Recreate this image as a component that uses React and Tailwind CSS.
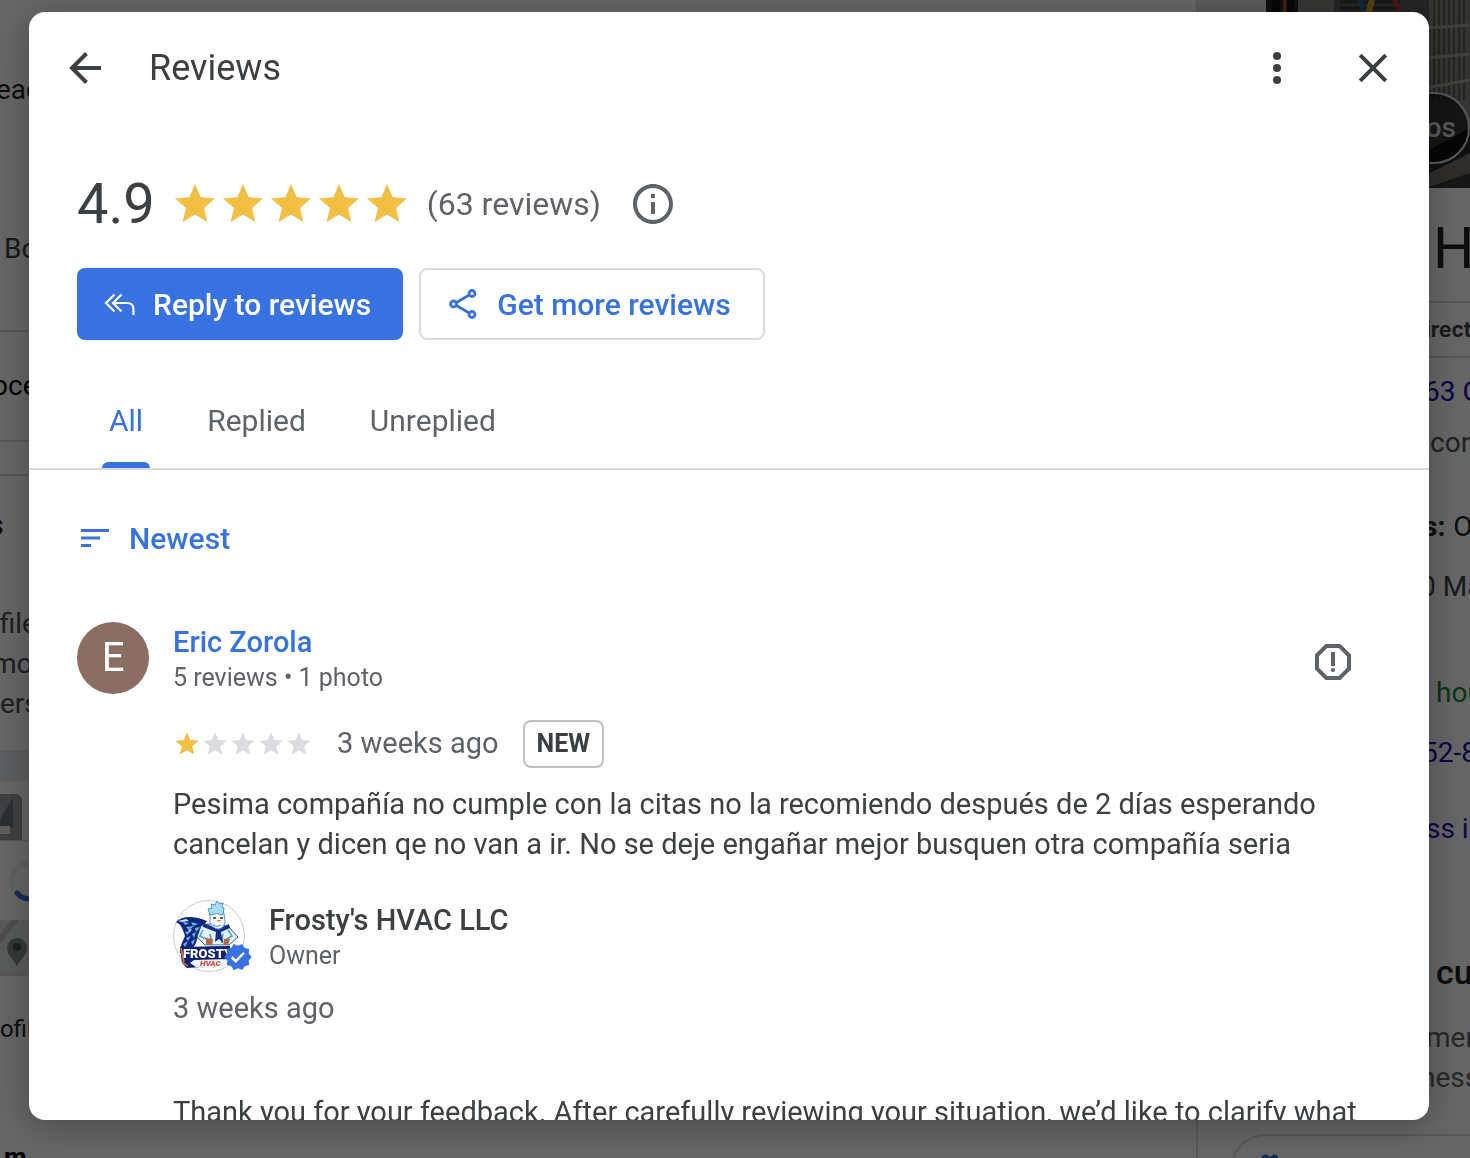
import React from "react";

const STAR = "M12 17.27 18.18 21l-1.64-7.03L22 9.24l-7.19-.61L12 2 9.19 8.63 2 9.24l5.46 4.73L5.82 21z";

function Star({ className }) {
  return (
    <svg viewBox="0 0 24 24" fill="currentColor" className={className} aria-hidden="true">
      <path d={STAR} />
    </svg>
  );
}

function BackIcon() {
  return (
    <svg viewBox="0 0 48 48" className="size-12" fill="none" stroke="currentColor" strokeWidth="4" aria-hidden="true">
      <path d="M40 24H11M25.5 9.5 11 24l14.5 14.5" />
    </svg>
  );
}

function CloseIcon() {
  return (
    <svg viewBox="0 0 48 48" className="size-12" fill="none" stroke="currentColor" strokeWidth="4" aria-hidden="true">
      <path d="M11.2 11.2 36.8 36.8M36.8 11.2 11.2 36.8" />
    </svg>
  );
}

function MoreIcon() {
  return (
    <svg viewBox="0 0 48 48" className="size-12" fill="currentColor" aria-hidden="true">
      <circle cx="24" cy="12" r="4" />
      <circle cx="24" cy="24" r="4" />
      <circle cx="24" cy="36" r="4" />
    </svg>
  );
}

function InfoIcon() {
  return (
    <svg viewBox="0 0 24 24" className="size-12" fill="currentColor" aria-hidden="true">
      <path d="M11 7h2v2h-2zm0 4h2v6h-2zm1-9C6.48 2 2 6.48 2 12s4.48 10 10 10 10-4.48 10-10S17.52 2 12 2zm0 18c-4.41 0-8-3.59-8-8s3.59-8 8-8 8 3.59 8 8-3.59 8-8 8z" />
    </svg>
  );
}

function ReplyAllIcon() {
  return (
    <svg viewBox="0 0 36 36" className="size-9" fill="none" stroke="currentColor" strokeWidth="2.2" aria-hidden="true">
      <path d="M13.500 8.500 5 17l8.500 8.500M20.500 8.500 12 17l8.500 8.500M12 17h14q6.500 0 6.500 6.500V29" />
    </svg>
  );
}

function ShareIcon() {
  return (
    <svg viewBox="0 0 36 36" className="size-9" fill="none" stroke="currentColor" strokeWidth="2.8" aria-hidden="true">
      <circle cx="27" cy="7.5" r="3" />
      <circle cx="8.5" cy="18" r="3" />
      <circle cx="27" cy="28.5" r="3" />
      <path d="m11.200 16.500 13.100-7.500M11.200 19.500l13.100 7.500" />
    </svg>
  );
}

function SortIcon() {
  return (
    <svg viewBox="0 0 36 36" className="size-9" fill="currentColor" aria-hidden="true">
      <path d="M4 9h28v3H4zM4 16.5h19v3H4zM4 24h10v3H4z" />
    </svg>
  );
}

function ReportIcon() {
  return (
    <svg viewBox="0 0 24 24" className="size-12" fill="currentColor" aria-hidden="true">
      <path d="M15.73 3H8.27L3 8.27v7.46L8.27 21h7.46L21 15.73V8.27L15.73 3zM19 14.9 14.9 19H9.1L5 14.9V9.1L9.1 5h5.8L19 9.1v5.8z" />
      <circle cx="12" cy="16" r="1" />
      <path d="M11 7h2v7h-2z" />
    </svg>
  );
}

function VerifiedIcon() {
  return (
    <svg viewBox="0 0 24 24" className="absolute -right-2 bottom-0 size-[30px]" aria-hidden="true">
      <path
        fill="#3871e0"
        d="M23 12l-2.440-2.790.34-3.690-3.610-.82-1.890-3.200L12 2.960 8.600 1.500 6.710 4.690 3.100 5.500l.34 3.700L1 12l2.440 2.790-.34 3.700 3.610.82L8.600 22.500l3.400-1.470 3.400 1.460 1.890-3.190 3.610-.82-.34-3.690L23 12z"
      />
      <path d="M7 12.200l3.200 3.200 6.600-6.800" fill="none" stroke="#fff" strokeWidth="2" />
    </svg>
  );
}

function FrostyLogo() {
  return (
    <svg viewBox="0 0 72 72" className="size-[72px]" role="img" aria-label="Frosty's HVAC LLC">
      <circle cx="36" cy="36" r="35.500" fill="#fff" stroke="#c8cacd" />
      {/* cape */}
      <path d="M3 22c6-6 17-7 31-1l-7 9-4 13-5 9-11 1c0-8 3-12 5-17-2-6-3-11-9-14z" fill="#10257c" />
      <path
        d="M10 22l6 1-4 2zM18 22l7 2-5 2zM13 27l8-1-5 4zM22 28l5-1-4 5zM12 32l6-1-4 4zM19 34l4-2-2 6zM13 38l5-2-3 5zM10 44l5-3-3 6zM18 42l4-3-2 6zM9 50l6-3-2 5zM17 49l4-3-1 5z"
        fill="#5fb7ee"
      />
      <path d="M5 21l8-2 3 2-7 1zM15 30l4-1-2 3z" fill="#bfe8ff" />
      {/* arms and body */}
      <path d="M28 26q13-5 28 1l9 10-9 8H32l-8-8z" fill="#e4f3fc" stroke="#2c5794" />
      <path d="M30 30l-3 6 8 4M55 30l4 6-7 4M37 34l2 9M50 34l-1 9" fill="none" stroke="#4f9ccc" strokeWidth="1.500" />
      <path d="M31 23l14 6 11-5 1 4-9 4 2 11-4-4-4 3 1-10-13-5z" fill="#142f86" />
      <path d="M33 38l7 1-1 7-6-1zM51 39h6l-2 6-5 1z" fill="#b96842" />
      <path d="M32 45h22l-2 5H34z" fill="#9fd3ee" />
      {/* head and hair */}
      <path d="M37 13q8-3 14 0l1 9q-2 7-7 7-6-1-8-7z" fill="#f6fbff" stroke="#5c9dcb" />
      <path d="M35 9l4-1-1-4 4 1 2-4 3 3 3-1-1 4 2 1-1 7q-7-3-13 0z" fill="#a8dcf3" stroke="#4d94c4" />
      <path d="M40 18h3M47 18h3" stroke="#19335e" strokeWidth="1.600" />
      <path d="M44 20h5l-4 2z" fill="#ee8544" />
      <path d="M40 25q4 3 8 0" fill="none" stroke="#5187ae" />
      {/* lettering */}
      <path d="M7 47l50-1v10l-4 9-39 3-5-5z" fill="#12206f" />
      <path d="M8 48l3 14M9 62l6 4" stroke="#e07a49" strokeWidth="1.500" />
      <text x="10" y="58" fontFamily="Roboto, sans-serif" fontWeight="900" fontSize="13" fill="#fff">FROSTY</text>
      <path d="M21 60l-4 3 6 4h30l4-8z" fill="#eef6ff" />
      <text x="27" y="66" fontFamily="Roboto, sans-serif" fontWeight="900" fontStyle="italic" fontSize="8" fill="#d64c30">HVAC</text>
    </svg>
  );
}

function CondenserPhoto() {
  return (
    <svg viewBox="0 0 204 188" className="block h-[188px] w-[204px]" aria-hidden="true">
      <rect width="204" height="188" fill="#5a5b59" />
      <rect width="40" height="20" fill="#26292c" />
      <rect x="32" width="36" height="20" fill="#888885" />
      <path d="M10 0v12M24 0v12" stroke="#111" strokeWidth="9" />
      <path d="M19 0v14" stroke="#a85c3c" strokeWidth="3" />
      <path d="M74 2h60M74 8h60" stroke="#393b3c" strokeWidth="3" />
      <path d="M94 0l4 12" stroke="#2467a5" strokeWidth="4" />
      <path d="M106 0l-4 14" stroke="#d3a52c" strokeWidth="6" />
      <path d="M129 0l4 12" stroke="#c2372d" strokeWidth="4" />
      <path d="M163 0h41v130l-41 20z" fill="#83847f" />
      <path
        d="M168 0v100M173 0v100M178 0v100M183 0v100M188 0v100M193 0v100M198 0v100"
        stroke="#5b5c58"
        strokeWidth="2"
      />
      <path d="M160 28l44-3M160 58l44-4M160 88l44-8" stroke="#a09f99" strokeWidth="3" />
      <path d="M160 152l44-24v25l-44 22z" fill="#262626" />
      <path d="M160 175l44-22v20l-44 15z" fill="#74716d" />
      <path d="M160 188l44-15v15z" fill="#3b3835" />
    </svg>
  );
}

function MapStrip() {
  return (
    <svg viewBox="0 0 60 54" className="block h-[54px] w-[60px]" aria-hidden="true">
      <rect width="60" height="54" fill="#dfe2e2" />
      <path d="M-2 22 18-4" stroke="#bfc3c7" strokeWidth="6" />
      <path d="M17 46c-3-6-10-11-10-18a10 10 0 0 1 20 0c0 7-7 12-10 18z" fill="#85898d" />
      <circle cx="17" cy="27" r="4" fill="#4c5054" />
    </svg>
  );
}

function Backdrop() {
  return (
    <div aria-hidden="true" className="flex min-h-screen overflow-hidden whitespace-nowrap bg-white text-[28px] text-[#202124]">
      <div className="h-screen min-w-0 flex-1 overflow-hidden">
        <div className="flex h-[180px] items-center">
          <span className="-ml-1">each</span>
        </div>
        <div className="mb-3 flex h-[138px] items-center pl-1 text-[#3c4043]">Book</div>
        <div className="flex h-[110px] items-center border-t-2 border-[#dadce0]">
          <span className="-ml-2 text-black">oces</span>
        </div>
        <div className="h-[34px] border-t-2 border-[#dadce0]" />
        <div className="flex h-[100px] items-center border-t-2 border-[#dadce0]">
          <span className="-ml-3 text-3xl font-bold text-black">s</span>
        </div>
        <div className="mt-[30px] mb-[26px] h-[120px] leading-[40px] text-[#4d5156]">
          <p className="-ml-2">-file</p>
          <p className="-ml-2">more</p>
          <p>ers</p>
        </div>
        <div className="h-[30px] bg-[#e8eaed]" />
        <div className="flex h-[60px] items-end border-t-2 border-[#f1f3f4]">
          <svg viewBox="0 0 22 46" className="h-[46px] w-[22px]">
            <path d="M0 0h15q7 0 7 7v39H0z" fill="#9c9fa2" />
            <path d="M13 4v30H0v-8L10 8z" fill="#6f7276" />
            <path d="M0 32h10v8H0z" fill="#eee" />
          </svg>
        </div>
        <div className="flex h-20 items-center border-t border-[#dadce0] pl-2">
          <svg viewBox="0 0 44 44" className="size-11" fill="none" strokeWidth="5">
            <circle cx="22" cy="22" r="18" stroke="#f0f1f2" />
            <path d="M9 34a18 18 0 0 0 14 6" stroke="#3871e0" strokeLinecap="round" />
          </svg>
        </div>
        <MapStrip />
        <div className="flex h-[108px] items-center border-t-2 border-[#dadce0] text-2xl">
          <span className="-ml-2">rofile</span>
        </div>
        <div className="mt-[56px] pl-1 text-[26px] font-bold text-black">m</div>
      </div>
      <div className="h-screen w-[274px] shrink-0 overflow-hidden border-l-2 border-[#dadce0]">
        <div className="relative flex justify-end bg-[#e3e4e6]">
          <CondenserPhoto />
          <div className="absolute top-[92px] right-0 flex h-[72px] w-[150px] items-center justify-end rounded-full border-2 border-[#dadce0] bg-black/60 pr-3 text-[28px] font-medium text-[#dadce0]">
            photos
          </div>
        </div>
        <div className="flex h-[113px] items-center pt-2 pl-[235px] text-[58px]">HVAC</div>
        <div className="flex h-[55px] items-center border-t-2 border-[#dadce0] pl-[212px] font-[Inter] text-[21px] font-bold text-[#3c4043]">
          Directions
        </div>
        <div className="flex h-[70px] items-center border-t-2 border-[#dadce0] pl-[226px] text-[#1a0dab]">63 C</div>
        <div className="flex h-[34px] items-center pl-[232px] text-[#4d5156]">con</div>
        <div className="mt-10 flex h-[54px] items-center gap-2 pl-[225px]">
          <b>s:</b> Open
        </div>
        <div className="flex h-[66px] items-center pl-[222px] text-[#3c4043]">0 Mar</div>
        <div className="mt-[38px] flex h-[70px] items-center pl-[238px] text-[#188038]">hours</div>
        <div className="flex h-[50px] items-center pl-[224px] text-[#1a0dab]">52-8</div>
        <div className="flex h-[102px] items-center pl-[228px] text-[#1a0dab]">ss in</div>
        <div className="mt-[62px] flex h-[60px] items-center pl-[238px] text-[34px] font-medium">customers</div>
        <div className="mt-4 leading-[40px] text-[#5f6368]">
          <p className="pl-[228px]">ments</p>
          <p className="pl-[222px]">ness</p>
        </div>
        <div className="mt-9 ml-8 h-[72px] w-[300px] rounded-full border-2 border-[#dadce0] pt-4 pl-7">
          <svg viewBox="0 0 20 20" className="size-5" fill="#3871e0">
            <path d="M2 4 6 2l4 3 4-3 4 2v14H2z" />
          </svg>
        </div>
      </div>
    </div>
  );
}

const TABS = ["All", "Replied", "Unreplied"];

export default function App() {
  return (
    <div className="font-[Roboto,sans-serif]">
      <Backdrop />
      <div className="fixed inset-0 flex bg-black/60 pt-3 pr-[41px] pb-[38px] pl-[29px]">
        <section
          role="dialog"
          aria-label="Reviews"
          className="flex min-w-0 flex-1 flex-col overflow-hidden rounded-2xl bg-white text-[29px] text-[#3c4043] shadow-[0_6px_36px_rgba(0,0,0,0.3)]"
        >
          <header className="flex h-28 shrink-0 items-center px-8">
            <button type="button" aria-label="Back">
              <BackIcon />
            </button>
            <h1 className="ml-10 flex-1 text-4xl">Reviews</h1>
            <button type="button" aria-label="More options">
              <MoreIcon />
            </button>
            <button type="button" aria-label="Close" className="ml-12">
              <CloseIcon />
            </button>
          </header>

          <div className="mt-12 flex h-16 shrink-0 items-center px-12">
            <span className="text-[56px] leading-[64px]">4.9</span>
            <span className="ml-4 flex text-[#f1bf42]" role="img" aria-label="4.9 out of 5 stars">
              {[0, 1, 2, 3, 4].map((i) => (
                <Star key={i} className="size-12" />
              ))}
            </span>
            <span className="ml-4 text-[32px] text-[#5f6368]">(63 reviews)</span>
            <button type="button" aria-label="About ratings" className="ml-7 text-[#5f6368]">
              <InfoIcon />
            </button>
          </div>

          <div className="mt-8 flex shrink-0 gap-4 px-12 text-[30px] font-medium">
            <button type="button" className="flex h-[72px] items-center gap-4 rounded-lg bg-[#3871e0] pr-8 pl-6 text-white">
              <ReplyAllIcon />
              Reply to reviews
            </button>
            <button
              type="button"
              className="flex h-[72px] items-center gap-4 rounded-lg border-2 border-[#dadce0] pr-8 pl-6 text-[#3871e0]"
            >
              <ShareIcon />
              Get more reviews
            </button>
          </div>

          <div role="tablist" className="mt-8 flex shrink-0 border-b-2 border-[#dadce0] px-12 text-[30px]">
            {TABS.map((tab, i) => (
              <button
                key={tab}
                type="button"
                role="tab"
                aria-selected={i === 0}
                className={
                  i === 0 ? "relative flex h-24 items-center px-8 text-[#3871e0]" : "flex h-24 items-center px-8 text-[#5f6368]"
                }
              >
                {tab}
                {i === 0 && (
                  <span className="absolute inset-x-0 bottom-0 mx-auto h-1.5 w-12 rounded-t-md bg-[#3871e0]" />
                )}
              </button>
            ))}
          </div>

          <div className="min-h-0 flex-1 overflow-hidden px-12 pt-12">
            <button type="button" className="flex h-10 items-center gap-4 text-[30px] font-medium text-[#3871e0]">
              <SortIcon />
              Newest
            </button>

            <article className="mt-16 flex gap-6">
              <div className="flex size-[72px] shrink-0 items-center justify-center rounded-full bg-[#8a6e64] text-[40px] text-white">
                E
              </div>
              <div className="min-w-0 flex-1">
                <div className="flex items-start justify-between">
                  <div>
                    <a href="#reviewer" className="block leading-[40px] font-medium text-[#3871e0]">
                      Eric Zorola
                    </a>
                    <p className="text-[25px] leading-[32px] text-[#5f6368]">5 reviews • 1 photo</p>
                  </div>
                  <button type="button" aria-label="Report review" className="mt-4 mr-6 text-[#5f6368]">
                    <ReportIcon />
                  </button>
                </div>

                <div className="mt-[26px] flex h-12 items-center">
                  <span className="flex" role="img" aria-label="1 out of 5 stars">
                    <Star className="size-7 text-[#f1bf42]" />
                    {[0, 1, 2, 3].map((i) => (
                      <Star key={i} className="size-7 text-[#dadce0]" />
                    ))}
                  </span>
                  <span className="ml-6 text-[#5f6368]">3 weeks ago</span>
                  <span className="ml-6 flex h-12 items-center rounded-lg border-2 border-[#bdc1c6] px-3 text-[25px] font-bold">
                    NEW
                  </span>
                </div>

                <p className="mt-4 leading-[40px]">
                  Pesima compañía no cumple con la citas no la recomiendo después de 2 días esperando cancelan y dicen qe
                  no van a ir. No se deje engañar mejor busquen otra compañía seria
                </p>

                <div className="mt-9 flex gap-6">
                  <div className="relative shrink-0">
                    <FrostyLogo />
                    <VerifiedIcon />
                  </div>
                  <div>
                    <p className="leading-[40px] font-medium">Frosty's HVAC LLC</p>
                    <p className="text-[25px] leading-[32px] text-[#5f6368]">Owner</p>
                  </div>
                </div>
                <p className="mt-4 leading-[40px] text-[#5f6368]">3 weeks ago</p>
                <p className="mt-16 leading-[40px]">
                  Thank you for your feedback. After carefully reviewing your situation, we’d like to clarify what
                </p>
              </div>
            </article>
          </div>
        </section>
      </div>
    </div>
  );
}
